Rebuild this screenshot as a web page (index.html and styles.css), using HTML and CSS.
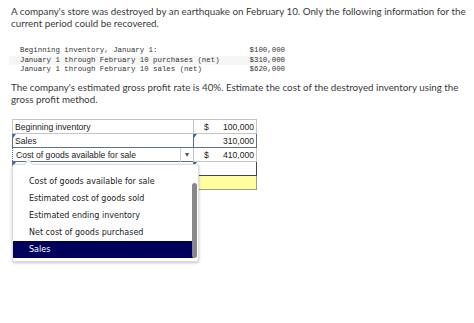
FILE: index.html
```html
<!DOCTYPE html>
<html>
<head>
    <title>Gross Profit Method</title>
    <link rel="stylesheet" href="styles.css">
</head>
<body>
    <p class="question">A company's store was destroyed by an earthquake on February 10. Only the following information for the current period could be recovered.</p>

    <div class="data">
        <div class="data-row"><span>Beginning inventory, January 1:</span><span>$100,000</span></div>
        <div class="data-row shaded"><span>January 1 through February 10 purchases (net)</span><span>$310,000</span></div>
        <div class="data-row"><span>January 1 through February 10 sales (net)</span><span>$620,000</span></div>
    </div>

    <p class="question">The company's estimated gross profit rate is 40%. Estimate the cost of the destroyed inventory using the gross profit method.</p>

    <div class="worksheet">
        <table class="sheet">
            <tr>
                <td class="label">Beginning inventory</td>
                <td class="amount"><span class="dollar">$</span><span>100,000</span></td>
            </tr>
            <tr>
                <td class="label input"><span class="flag"></span>Sales</td>
                <td class="amount input"><span class="flag"></span><span>310,000</span></td>
            </tr>
            <tr>
                <td class="label focused">
                    <div class="select">Cost of goods available for sale<span class="arrow">&#9662;</span></div>
                </td>
                <td class="amount"><span class="dollar">$</span><span>410,000</span></td>
            </tr>
            <tr>
                <td class="label input"><span class="flag"></span></td>
                <td class="amount input dark"><span class="flag"></span></td>
            </tr>
            <tr class="total">
                <td class="label blank"></td>
                <td class="amount answer"></td>
            </tr>
        </table>

        <div class="menu">
            <div class="notch"></div>
            <ul class="options">
                <li>Cost of goods available for sale</li>
                <li>Estimated cost of goods sold</li>
                <li>Estimated ending inventory</li>
                <li>Net cost of goods purchased</li>
                <li class="picked">Sales</li>
            </ul>
            <div class="scroll"></div>
        </div>
    </div>
</body>
</html>
```

FILE: styles.css
```css
html, body { height: 100%; }
body {
    margin: 0;
    padding: 6px 6px 6px 11px;
    box-sizing: border-box;
    font-family: "Lato", sans-serif;
    color: #3a3a3a;
    background: #fff;
}
.question { margin: 0; font-size: 9.8px; line-height: 11.6px; }
.data {
    margin: 17px 0 7px -2px;
    width: 265px;
    font-family: "Liberation Mono", monospace;
    font-size: 7.4px;
    line-height: 9.6px;
    color: #333;
    padding-left: 11px;
}
.data-row { display: flex; justify-content: space-between; }
.data-row.shaded { background: #f6f6f6; margin-left: -11px; padding-left: 11px; }

.worksheet { position: relative; margin-top: 14px; }
.sheet {
    border-collapse: collapse;
    font-family: "Liberation Sans", Arial, sans-serif;
    font-size: 8.6px;
    color: #222;
    margin-left: 1px;
}
.sheet td { height: 13px; padding: 0 2px; border: 1px solid #c4c4c4; position: relative; }
.sheet .label { width: 176px; }
.sheet .amount { width: 58px; }
.amount { text-align: right; }
.dollar { float: left; width: 10px; margin-left: 8px; text-align: left; }
.sheet td.input { border: 1px solid #5a6f8c; }
.sheet td.dark { border: 1px solid #444; }
.flag {
    position: absolute;
    left: 0; top: 0;
    width: 0; height: 0;
    border-top: 4px solid #3b6bb5;
    border-right: 3px solid transparent;
}
.sheet td.focused { border: 1px dotted #3b6bb5; padding: 0; }
.select { position: relative; padding: 0 3px; }
.arrow {
    position: absolute;
    right: 1px; top: -2px;
    width: 11px;
    border-left: 1px solid #ccc;
    text-align: center;
    font-size: 8px;
    line-height: 14px;
    color: #555;
}
.total td { border: none; }
.total td.answer { background: #ffffa0; border: 1px solid #999; }

.menu {
    position: absolute;
    left: 1px; top: 45px;
    width: 185px; height: 96px;
    background: #fff;
    border: 1px solid #ddd;
    border-radius: 3px;
    box-shadow: 0 1px 3px rgba(0,0,0,0.25);
}
.notch {
    position: absolute;
    left: 12px; top: -4px;
    width: 6px; height: 6px;
    background: #fff;
    border-left: 1px solid #ddd;
    border-top: 1px solid #ddd;
    transform: rotate(45deg);
}
.options {
    list-style: none;
    margin: 8px 0 0;
    padding: 0;
    font-family: "DejaVu Sans", Verdana, sans-serif;
    font-size: 8px;
    color: #222;
}
.options li { height: 17px; line-height: 17px; padding-left: 16px; margin-right: 5px; }
.options li.picked { background: #00005c; color: #fff; }
.scroll {
    position: absolute;
    right: 1px; top: 18px;
    width: 5px; height: 75px;
    background: #888;
    border-radius: 3px;
}
```
